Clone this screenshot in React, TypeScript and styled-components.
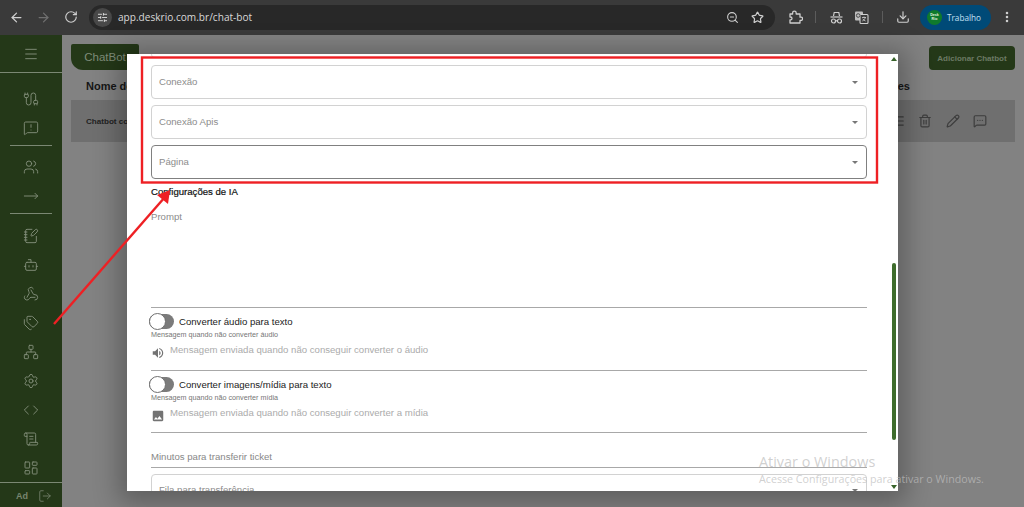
import React from "react";
import styled, { createGlobalStyle } from "styled-components";
import {
  ArrowLeft, ArrowRight, RotateCw, SlidersHorizontal, ZoomOut, Star, Download, Cable,
  EllipsisVertical, Menu, MessageSquareWarning, Users, MoveRight, NotebookPen, Bot, Webhook, Tags,
  Network, Settings, Code, ScrollText, LayoutDashboard, LogOut, Trash2, Pencil,
  MessageSquareMore, AlignJustify,
} from "lucide-react";
import { MdVolumeUp, MdImage } from "react-icons/md";

const Global = createGlobalStyle`
  html, body { margin: 0; padding: 0; width: 1024px; height: 507px; overflow: hidden; background: #828282; }
  * { box-sizing: border-box; }
  body { font-family: "Liberation Sans", Arial, sans-serif; }
`;

const Page = styled.div`
  position: relative;
  width: 1024px;
  height: 507px;
  display: flex;
  flex-direction: column;
  overflow: hidden;
`;

const Toolbar = styled.header`
  height: 35px;
  flex: none;
  display: flex;
  align-items: center;
  background: #3a3a3a;
  color: #d0d0d0;
  padding: 0 0 1px 8px;
`;

const ToolButton = styled.span<{ $w?: number; $dim?: boolean }>`
  width: ${(p) => p.$w ?? 27}px;
  flex: none;
  display: flex;
  align-items: center;
  justify-content: center;
  color: ${(p) => (p.$dim ? "#6f6f6f" : "#cfcfcf")};
`;

const NavGroup = styled.div`
  display: flex;
  align-items: center;
  margin-right: 5px;
  margin-left: -5px;
`;

const Omnibox = styled.div`
  width: 686px;
  height: 25px;
  flex: none;
  border-radius: 13px;
  background: #282828;
  display: flex;
  align-items: center;
  padding: 0 5px 0 4px;
  margin-right: 8px;
`;

const SiteChip = styled.span`
  width: 19px;
  height: 19px;
  border-radius: 50%;
  background: #484848;
  display: flex;
  align-items: center;
  justify-content: center;
  color: #ddd;
  margin-right: 6px;
`;

const Url = styled.span`
  flex: 1;
  font: 10.1px "Open Sans", sans-serif;
  color: #d8d8d8;
`;

const Divider = styled.span`
  width: 1px;
  height: 12px;
  background: #5c5c5c;
  flex: none;
  margin: 0 8px;
`;

const Profile = styled.div`
  width: 71px;
  height: 25px;
  border-radius: 13px;
  background: #004a77;
  display: flex;
  align-items: center;
  gap: 5px;
  padding-left: 7px;
  color: #c3e0f5;
  font: 8.2px "Open Sans", sans-serif;
  margin-left: 5px;
`;

const Avatar = styled.span`
  width: 15px;
  height: 15px;
  border-radius: 50%;
  background: #0f7a2c;
  color: #e8f5e0;
  font: bold 3.6px/4px "Liberation Sans", sans-serif;
  display: flex;
  align-items: center;
  justify-content: center;
  text-align: center;
`;

const Body = styled.div`
  flex: 1;
  display: flex;
  min-height: 0;
`;

const Sidebar = styled.nav`
  width: 62px;
  flex: none;
  background: #243818;
  color: #838f7b;
  display: flex;
  flex-direction: column;
  align-items: center;
`;

const MenuCell = styled.div`
  height: 38px;
  width: 100%;
  flex: none;
  display: flex;
  align-items: center;
  justify-content: center;
  border-bottom: 1px solid #7b8873;
`;

const NavColumn = styled.div`
  width: 100%;
  display: flex;
  flex-direction: column;
  align-items: center;
  padding-top: 11px;
`;

const NavItem = styled.div`
  height: 29px;
  flex: none;
  display: flex;
  align-items: center;
  justify-content: center;
`;

const NavRule = styled.div<{ $tight?: boolean }>`
  width: 42px;
  height: 1px;
  background: #7b8873;
  margin: 3px 0 ${(p) => (p.$tight ? 6 : 7)}px;
  flex: none;
`;

const SidebarFooter = styled.div`
  margin-top: auto;
  width: 100%;
  height: 27px;
  flex: none;
  border-top: 1px solid #7b8873;
  display: flex;
  align-items: center;
  justify-content: center;
  gap: 10px;
  padding-left: 6px;
  font: bold 9px "Liberation Sans", sans-serif;
  color: #78856f;
`;

const Main = styled.main`
  flex: 1;
  background: #828282;
  padding: 9px 9px 0;
  display: flex;
  flex-direction: column;
`;

const MainTop = styled.div`
  display: flex;
  justify-content: space-between;
  align-items: flex-start;
  height: 35px;
`;

const Tab = styled.div`
  width: 68px;
  height: 26px;
  background: #243818;
  color: #7f8c78;
  border-radius: 2px 2px 2px 12px;
  font-size: 11.5px;
  display: flex;
  align-items: center;
  justify-content: center;
`;

const AddButton = styled.div`
  width: 86px;
  height: 24px;
  margin-top: 2px;
  border-radius: 4px;
  background: #243818;
  color: #6c7a64;
  font: bold 8px "Liberation Sans", sans-serif;
  display: flex;
  align-items: center;
  justify-content: center;
`;

const TableHead = styled.div`
  height: 21px;
  padding: 0 105px 0 15px;
  display: flex;
  justify-content: space-between;
  align-items: flex-start;
  font: bold 11px/14px "Liberation Sans", sans-serif;
  color: #161616;
`;

const TableRow = styled.div`
  height: 42px;
  background: #6f6f6f;
  display: flex;
  align-items: center;
  justify-content: space-between;
  padding: 0 28px 0 15px;
  font: bold 8.1px "Liberation Sans", sans-serif;
  color: #222;
`;

const RowIcons = styled.div`
  display: flex;
  gap: 13.5px;
  color: #3d3d3d;
`;

const Modal = styled.section`
  position: absolute;
  left: 127px;
  top: 54px;
  width: 771px;
  height: 437px;
  background: #fff;
  box-shadow: 0 4px 24px 8px rgba(0, 0, 0, 0.28);
  display: flex;
  overflow: hidden;
`;

const ModalContent = styled.div`
  flex: 1;
  min-width: 0;
  padding: 0 23px 0 24px;
  display: flex;
  flex-direction: column;
  overflow: hidden;
`;

const ScrollRail = styled.div`
  width: 7px;
  flex: none;
  margin-right: 1px;
  display: flex;
  flex-direction: column;
  align-items: center;
  padding: 3px 0 2px;
`;

const RailArrow = styled.span<{ $down?: boolean }>`
  width: 0;
  height: 0;
  flex: none;
  border-left: 3px solid transparent;
  border-right: 3px solid transparent;
  ${(p) => (p.$down ? "border-top: 4px solid #37622a;" : "border-bottom: 4px solid #37622a;")}
`;

const RailThumb = styled.span`
  width: 4px;
  height: 177px;
  flex: none;
  background: #3e6c2c;
  border-radius: 2px;
  margin-top: 202px;
  margin-bottom: auto;
`;

const PriorEdge = styled.div`
  height: 4px;
  flex: none;
  border: 1px solid #dcdcdc;
  border-top: 0;
  border-radius: 0 0 4px 4px;
  margin-bottom: 7px;
`;

const SelectField = styled.div<{ $focus?: boolean }>`
  height: 34px;
  flex: none;
  border: 1px solid ${(p) => (p.$focus ? "#808080" : "#d2d2d2")};
  border-radius: 4px;
  display: flex;
  align-items: center;
  justify-content: space-between;
  padding: 0 8px 2px 7px;
  margin-bottom: 6px;
  color: #8c8c8c;
  font-size: 9.6px;
`;

const Caret = styled.span`
  width: 0;
  height: 0;
  margin-top: 2px;
  border-left: 3.5px solid transparent;
  border-right: 3.5px solid transparent;
  border-top: 3.5px solid #777;
`;

const SectionTitle = styled.div`
  font-size: 9.6px;
  color: #111;
  line-height: 14px;
  -webkit-text-stroke: 0.2px #111;
`;

const Underlined = styled.div<{ $h: number }>`
  height: ${(p) => p.$h}px;
  flex: none;
  border-bottom: 1px solid #a8a8a8;
  color: #8c8c8c;
  font-size: 9.6px;
`;

const PromptArea = styled(Underlined)`
  padding-top: 12px;
`;

const ToggleRow = styled.div`
  height: 16px;
  display: flex;
  align-items: center;
  gap: 5px;
  margin: 5px 0 0 -2px;
  flex: none;
  font-size: 9.6px;
  color: #222;
`;

const Toggle = styled.span`
  width: 25px;
  height: 15px;
  border-radius: 8px;
  background: #7b7b7b;
  display: flex;
  align-items: center;
  &::before {
    content: "";
    width: 15px;
    height: 15px;
    border-radius: 50%;
    background: #fff;
    border: 1px solid #6f6f6f;
  }
`;

const Caption = styled.div`
  font-size: 7.2px;
  line-height: 8px;
  color: #757575;
  flex: none;
  margin-top: 2px;
`;

const MessageRow = styled(Underlined)`
  display: flex;
  gap: 5px;
  padding-top: 5px;
  color: #ababab;
  line-height: 12px;
`;

const MessageIcon = styled.span`
  color: #737373;
  padding-top: 2px;
  display: flex;
  flex: none;
`;

const MinutesField = styled(Underlined)`
  padding-top: 18px;
  margin-bottom: 6px;
  color: #888;
`;

const ClippedField = styled(SelectField)`
  align-items: flex-start;
  padding-top: 9px;
`;

const ClippedCaret = styled(Caret)`
  margin-top: 5px;
`;

const Annotation = styled.svg`
  position: absolute;
  left: 0;
  top: 0;
  pointer-events: none;
`;

const Watermark = styled.div`
  position: absolute;
  left: 759px;
  top: 452px;
  color: rgba(190, 190, 190, 0.72);
  font-family: "Open Sans", sans-serif;
  pointer-events: none;
`;

const WatermarkTitle = styled.div`
  font-size: 14.4px;
  line-height: 19px;
`;

const WatermarkText = styled.div`
  font-size: 10.7px;
  line-height: 14px;
  margin-top: 1px;
  white-space: nowrap;
`;

function ExtensionIcon() {
  return (
    <svg width="15" height="15" viewBox="0 0 15 15" fill="none" stroke="currentColor" strokeWidth="1.3" strokeLinejoin="round">
      <path d="M2 4h2.6V3a1.8 1.8 0 0 1 3.6 0v1H12v3.2h1a1.6 1.6 0 0 1 0 3.2h-1V13H2V9.8h.6a1.4 1.4 0 0 0 0-2.8H2z" />
    </svg>
  );
}

function IncognitoIcon() {
  return (
    <svg width="15" height="15" viewBox="0 0 15 15" fill="none" stroke="currentColor" strokeWidth="1.2">
      <path d="M4.5 6 5.2 2.5h4.6L10.5 6" />
      <path d="M1.5 7h12" />
      <circle cx="4.5" cy="11" r="2" />
      <circle cx="10.5" cy="11" r="2" />
      <path d="M6.5 10.8h2" />
    </svg>
  );
}

function TranslateIcon() {
  return (
    <svg width="15" height="15" viewBox="0 0 15 15" fill="none" stroke="currentColor" strokeWidth="1.1">
      <rect x="1" y="1.5" width="8" height="9" rx="1" fill="#bdbdbd" stroke="none" />
      <rect x="6" y="4.5" width="8" height="9" rx="1" fill="#3a3a3a" />
      <path d="M8 7.5h4M10 6.5v1M11.3 7.5c-.4 1.6-1.4 2.8-3 3.5M8.8 8.8c.6 1 1.5 1.8 2.7 2.2" strokeWidth=".8" />
      <circle cx="4.2" cy="5.5" r="1.8" stroke="#3a3a3a" strokeWidth=".9" />
    </svg>
  );
}

export default function App() {
  const s = 16;
  const w = 1.4;
  return (
    <Page>
      <Global />
      <Toolbar>
        <NavGroup>
          <ToolButton><ArrowLeft size={15} strokeWidth={2} /></ToolButton>
          <ToolButton $dim><ArrowRight size={15} strokeWidth={2} /></ToolButton>
          <ToolButton><RotateCw size={14} strokeWidth={2} /></ToolButton>
        </NavGroup>
        <Omnibox>
          <SiteChip><SlidersHorizontal size={11} strokeWidth={2} /></SiteChip>
          <Url>app.deskrio.com.br/chat-bot</Url>
          <ToolButton $w={25}><ZoomOut size={13} strokeWidth={2} /></ToolButton>
          <ToolButton $w={25}><Star size={13} strokeWidth={2.2} /></ToolButton>
        </Omnibox>
        <ToolButton $w={24}><ExtensionIcon /></ToolButton>
        <Divider />
        <ToolButton $w={24}><IncognitoIcon /></ToolButton>
        <ToolButton $w={26}><TranslateIcon /></ToolButton>
        <Divider />
        <ToolButton $w={24}><Download size={14} strokeWidth={2} /></ToolButton>
        <Profile><Avatar>Desk Rio</Avatar>Trabalho</Profile>
        <ToolButton $w={32}><EllipsisVertical size={14} strokeWidth={2.4} /></ToolButton>
      </Toolbar>
      <Body>
        <Sidebar>
          <MenuCell><Menu size={s} strokeWidth={w} /></MenuCell>
          <NavColumn>
            <NavItem><Cable size={s} strokeWidth={w} /></NavItem>
            <NavItem><MessageSquareWarning size={s} strokeWidth={w} /></NavItem>
            <NavRule $tight />
            <NavItem><Users size={s} strokeWidth={w} /></NavItem>
            <NavItem><MoveRight size={s} strokeWidth={w} /></NavItem>
            <NavRule />
            <NavItem><NotebookPen size={s} strokeWidth={w} /></NavItem>
            <NavItem><Bot size={s} strokeWidth={w} /></NavItem>
            <NavItem><Webhook size={s} strokeWidth={w} /></NavItem>
            <NavItem><Tags size={s} strokeWidth={w} /></NavItem>
            <NavItem><Network size={s} strokeWidth={w} /></NavItem>
            <NavItem><Settings size={s} strokeWidth={w} /></NavItem>
            <NavItem><Code size={s} strokeWidth={w} /></NavItem>
            <NavItem><ScrollText size={s} strokeWidth={w} /></NavItem>
            <NavItem><LayoutDashboard size={s} strokeWidth={w} /></NavItem>
          </NavColumn>
          <SidebarFooter>Ad <LogOut size={14} strokeWidth={w} /></SidebarFooter>
        </Sidebar>
        <Main>
          <MainTop>
            <Tab>ChatBot</Tab>
            <AddButton>Adicionar Chatbot</AddButton>
          </MainTop>
          <TableHead><span>Nome do</span><span>Ações</span></TableHead>
          <TableRow>
            <span>Chatbot co</span>
            <RowIcons>
              <AlignJustify size={14} />
              <Trash2 size={14} />
              <Pencil size={14} />
              <MessageSquareMore size={14} />
            </RowIcons>
          </TableRow>
        </Main>
      </Body>
      <Modal>
        <ModalContent>
          <PriorEdge />
          <SelectField>Conexão<Caret /></SelectField>
          <SelectField>Conexão Apis<Caret /></SelectField>
          <SelectField $focus>Página<Caret /></SelectField>
          <SectionTitle>Configurações de IA</SectionTitle>
          <PromptArea $h={109}>Prompt</PromptArea>
          <ToggleRow><Toggle />Converter áudio para texto</ToggleRow>
          <Caption>Mensagem quando não converter áudio</Caption>
          <MessageRow $h={32}>
            <MessageIcon><MdVolumeUp size={14} /></MessageIcon>
            Mensagem enviada quando não conseguir converter o áudio
          </MessageRow>
          <ToggleRow><Toggle />Converter imagens/mídia para texto</ToggleRow>
          <Caption>Mensagem quando não converter mídia</Caption>
          <MessageRow $h={31}>
            <MessageIcon><MdImage size={14} /></MessageIcon>
            Mensagem enviada quando não conseguir converter a mídia
          </MessageRow>
          <MinutesField $h={35}>Minutos para transferir ticket</MinutesField>
          <ClippedField>Fila para transferência<ClippedCaret /></ClippedField>
        </ModalContent>
        <ScrollRail>
          <RailArrow />
          <RailThumb />
          <RailArrow $down />
        </ScrollRail>
      </Modal>
      <Annotation width="1024" height="507" viewBox="0 0 1024 507">
        <rect x="142" y="57.5" width="735" height="125" fill="none" stroke="#ee2024" strokeWidth="2.4" />
        <path d="M54 324 L165 197" stroke="#ee2024" strokeWidth="2.4" fill="none" />
        <path d="M170 190 L168 204 L157 195 Z" fill="#ee2024" />
      </Annotation>
      <Watermark>
        <WatermarkTitle>Ativar o Windows</WatermarkTitle>
        <WatermarkText>Acesse Configurações para ativar o Windows.</WatermarkText>
      </Watermark>
    </Page>
  );
}
